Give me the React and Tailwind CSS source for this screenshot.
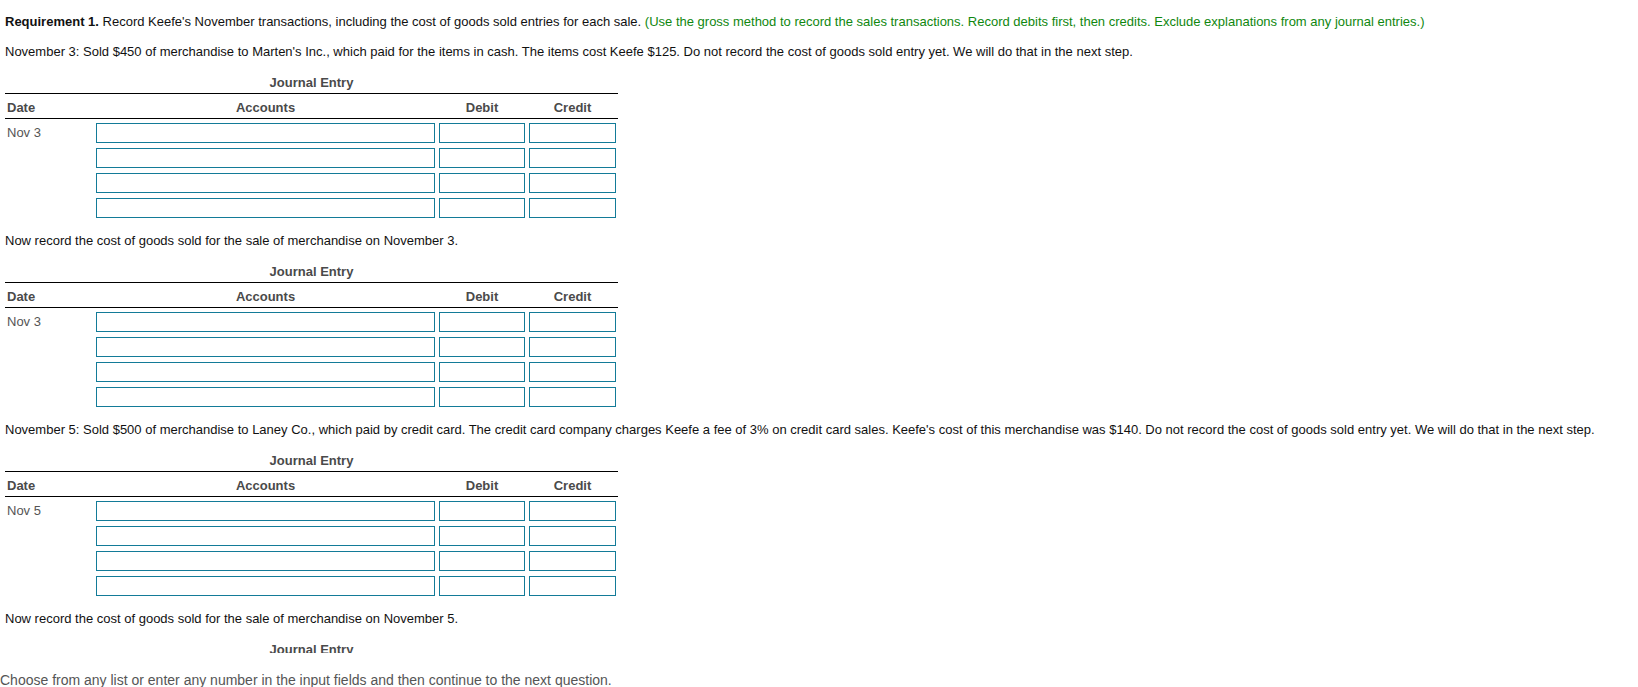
import React from "react";

const font = { fontFamily: '"Liberation Sans", Arial, Helvetica, sans-serif' };

function Inp({ w }) {
  return <div className={`${w} h-[20px] border border-[#137b98] bg-white shrink-0`} />;
}

function Journal({ date }) {
  const rows = [0, 1, 2, 3];
  return (
    <div className="w-[613px]">
      <div className="mt-[15px] text-center font-bold text-[13px] leading-[16px] text-[#4a4a4a]">Journal Entry</div>
      <div className="mt-[2px] flex border-t border-b border-black pt-[6px] pb-[2px] text-[13px] leading-[16px] font-bold text-[#4a4a4a]">
        <div className="w-[91px] pl-[2px]">Date</div>
        <div className="w-[339px] text-center">Accounts</div>
        <div className="w-[86px] ml-[4px] text-center">Debit</div>
        <div className="w-[87px] ml-[4px] text-center">Credit</div>
      </div>
      <div className="mt-[4px] flex flex-col gap-[5px]">
        {rows.map((r) => (
          <div key={r} className="flex items-center">
            <div className="w-[91px] pl-[2px] text-[13px] leading-[16px] text-[#555555]">{r === 0 ? date : ""}</div>
            <Inp w="w-[339px]" />
            <div className="w-[4px]" />
            <Inp w="w-[86px]" />
            <div className="w-[4px]" />
            <Inp w="w-[87px]" />
          </div>
        ))}
      </div>
    </div>
  );
}

function Para({ children }) {
  return <div className="mt-[15px] whitespace-nowrap text-[13px] leading-[16px] text-[#111111]">{children}</div>;
}

export default function App() {
  return (
    <div className="relative h-[687px] w-[1638px] overflow-hidden bg-white" style={font}>
      <div className="pl-[5px] pt-[14px]">
        <div className="whitespace-nowrap text-[13px] leading-[16px] text-[#111111]">
          <span className="font-bold">Requirement 1.</span> Record Keefe's November transactions, including the cost of goods sold entries for each sale.{" "}
          <span className="text-[#10870f]">(Use the gross method to record the sales transactions. Record debits first, then credits. Exclude explanations from any journal entries.)</span>
        </div>
        <div className="mt-[14px] whitespace-nowrap text-[13px] leading-[16px] text-[#111111]">
          November 3: Sold $450 of merchandise to Marten's Inc., which paid for the items in cash. The items cost Keefe $125. Do not record the cost of goods sold entry yet. We will do that in the next step.
        </div>
        <Journal date="Nov 3" />
        <Para>Now record the cost of goods sold for the sale of merchandise on November 3.</Para>
        <Journal date="Nov 3" />
        <Para>November 5: Sold $500 of merchandise to Laney Co., which paid by credit card. The credit card company charges Keefe a fee of 3% on credit card sales. Keefe's cost of this merchandise was $140. Do not record the cost of goods sold entry yet. We will do that in the next step.</Para>
        <Journal date="Nov 5" />
        <Para>Now record the cost of goods sold for the sale of merchandise on November 5.</Para>
        <Journal date="Nov 5" />
      </div>
      <div className="absolute left-0 right-0 top-[653px] h-[34px] bg-white">
        <div className="pt-[19px] whitespace-nowrap text-[14px] leading-[16px] text-[#555555]">
          Choose from any list or enter any number in the input fields and then continue to the next question.
        </div>
      </div>
    </div>
  );
}
